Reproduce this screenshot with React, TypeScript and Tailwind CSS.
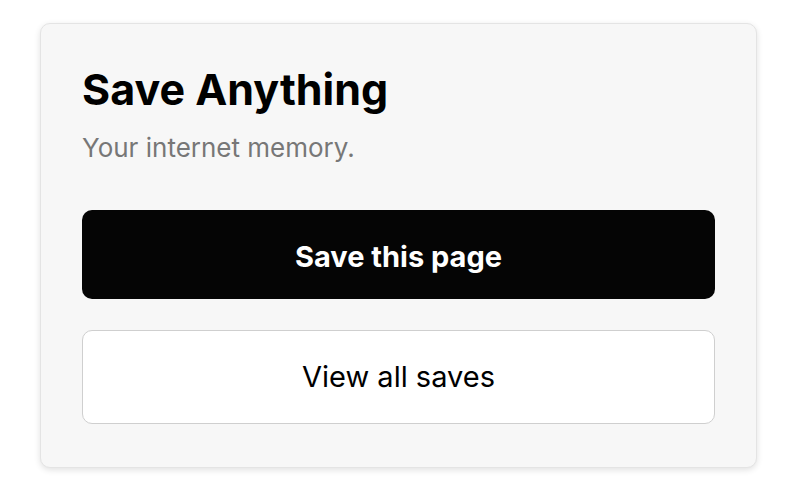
import React from 'react';

export default function App() {
  return (
    <div
      className="min-h-[500px] w-[800px] bg-white pl-[40px] pt-[23px]"
      style={{ fontFamily: 'Inter, "Liberation Sans", sans-serif' }}
    >
      <div className="w-[717px] h-[445px] rounded-[10px] border border-[#e4e4e4] bg-[#f7f7f7] px-[41px] pt-[39px] shadow-[0_2px_6px_rgba(0,0,0,0.12)]">
        <h1 className="text-[43px] leading-[52px] font-bold text-black">
          Save Anything
        </h1>
        <p className="mt-[17px] text-[26px] leading-[32px] text-[#777777]">
          Your internet memory.
        </p>
        <div className="mt-[46px] flex flex-col gap-[31px]">
          <button className="h-[89px] w-full rounded-[10px] bg-[#050505] pt-[4px] text-[29px] font-bold text-white">
            Save this page
          </button>
          <button className="h-[94px] w-full rounded-[10px] border border-[#cfcfcf] bg-white text-[29px] text-black">
            View all saves
          </button>
        </div>
      </div>
    </div>
  );
}
